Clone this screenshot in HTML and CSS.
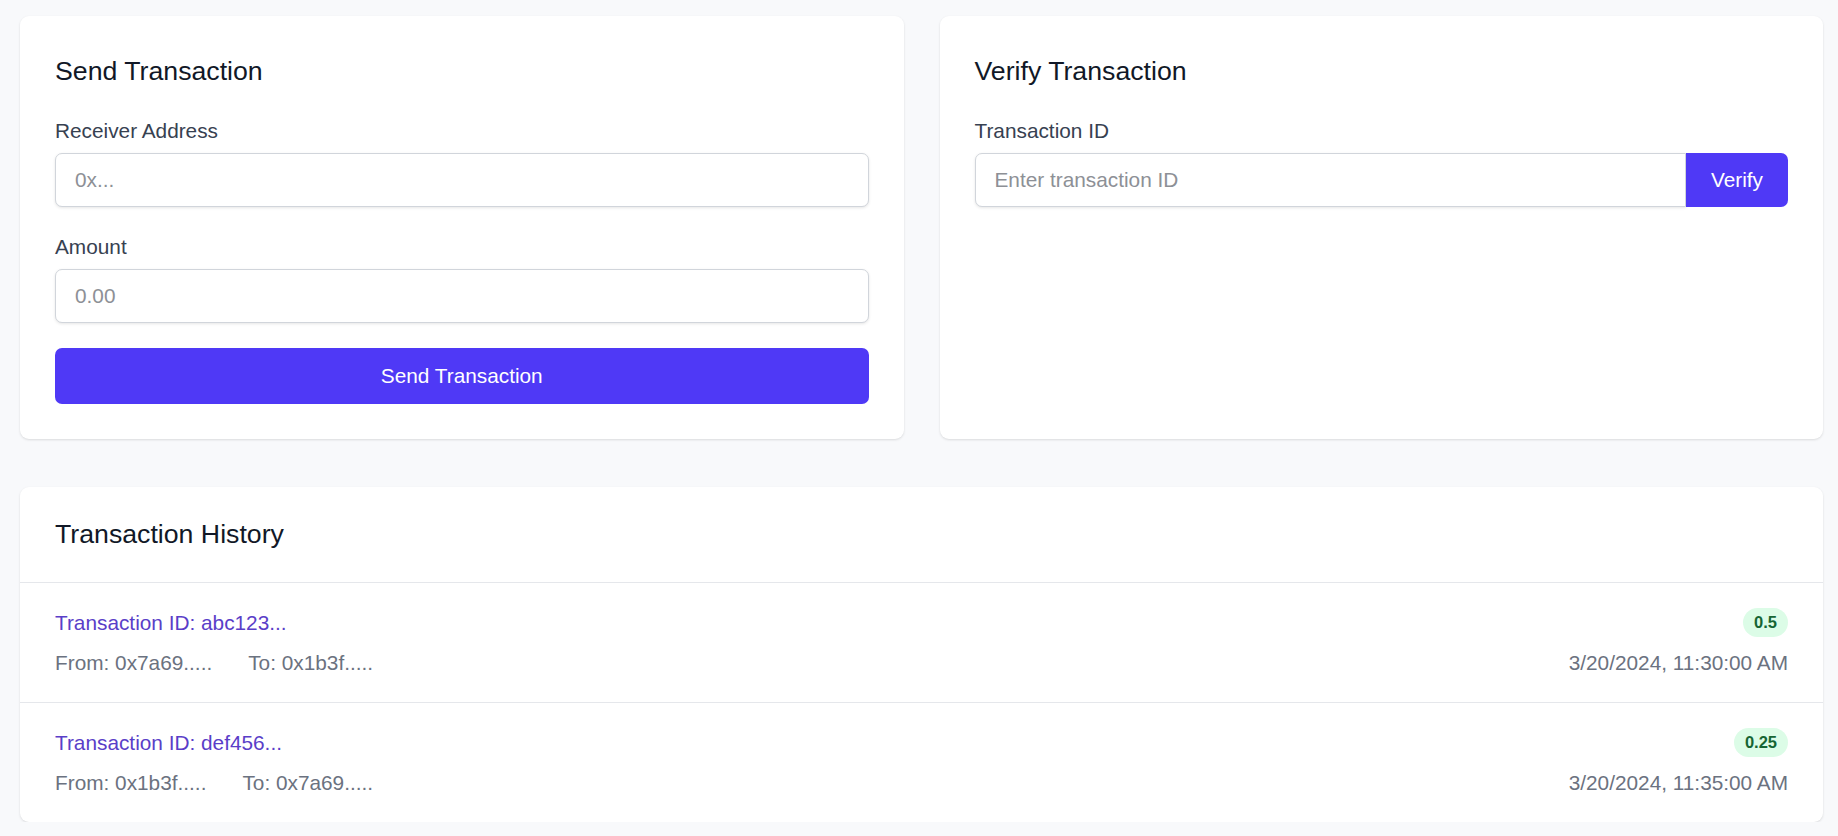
FILE: index.html
```html
<!DOCTYPE html>
<html lang="en">
<head>
<meta charset="utf-8">
<title>Transactions</title>
<link rel="stylesheet" href="styles.css">
</head>
<body>
<main class="page">
  <section class="top-grid">
    <div class="card form-card">
      <h2 class="card-title">Send Transaction</h2>
      <div class="field">
        <label class="label">Receiver Address</label>
        <input class="input" type="text" placeholder="0x...">
      </div>
      <div class="field">
        <label class="label">Amount</label>
        <input class="input" type="text" placeholder="0.00">
      </div>
      <button class="btn btn-block">Send Transaction</button>
    </div>
    <div class="card form-card">
      <h2 class="card-title">Verify Transaction</h2>
      <div class="field">
        <label class="label">Transaction ID</label>
        <div class="input-group">
          <input class="input input-joined" type="text" placeholder="Enter transaction ID">
          <button class="btn btn-joined">Verify</button>
        </div>
      </div>
    </div>
  </section>

  <section class="card history">
    <div class="history-header">
      <h2 class="card-title">Transaction History</h2>
    </div>
    <div class="tx-row">
      <div class="tx-line">
        <span class="tx-id">Transaction ID: abc123...</span>
        <span class="badge">0.5</span>
      </div>
      <div class="tx-line">
        <div class="tx-parties"><span>From: 0x7a69.....</span><span>To: 0x1b3f.....</span></div>
        <span class="tx-date">3/20/2024, 11:30:00 AM</span>
      </div>
    </div>
    <div class="tx-row">
      <div class="tx-line">
        <span class="tx-id">Transaction ID: def456...</span>
        <span class="badge">0.25</span>
      </div>
      <div class="tx-line">
        <div class="tx-parties"><span>From: 0x1b3f.....</span><span>To: 0x7a69.....</span></div>
        <span class="tx-date">3/20/2024, 11:35:00 AM</span>
      </div>
    </div>
  </section>
</main>
</body>
</html>
```

FILE: styles.css
```css
* { box-sizing: border-box; }

html, body {
  margin: 0;
  padding: 0;
  background: #f8f9fb;
  font-family: "Liberation Sans", Arial, sans-serif;
  font-size: 20.8px;
  color: #111827;
}

.page {
  padding: 16px 15px 0 20px;
  display: flex;
  flex-direction: column;
  gap: 48px;
}

.top-grid {
  display: grid;
  grid-template-columns: 1fr 1fr;
  gap: 36px;
}

.card {
  background: #ffffff;
  border-radius: 9px;
  box-shadow: 0 1px 3px rgba(0, 0, 0, 0.08), 0 1px 2px rgba(0, 0, 0, 0.05);
}

.form-card {
  padding: 38px 35px 35px;
  display: flex;
  flex-direction: column;
}

.card-title {
  margin: 0;
  font-size: 26.7px;
  line-height: 35px;
  font-weight: 400;
  color: #111827;
}

.form-card .card-title {
  margin-bottom: 28px;
}

.field {
  display: flex;
  flex-direction: column;
  margin-bottom: 26px;
}

.label {
  font-size: 20.8px;
  line-height: 28px;
  color: #374151;
  margin-bottom: 8px;
}

.input {
  height: 54px;
  width: 100%;
  border: 1px solid #d1d5db;
  border-radius: 7px;
  padding: 0 19px;
  font-family: inherit;
  font-size: 20.8px;
  color: #111827;
  background: #fff;
  box-shadow: 0 1px 3px rgba(0, 0, 0, 0.1);
  outline: none;
}

.input::placeholder {
  color: #8d9096;
}

.btn {
  background: #4f39f6;
  color: #ffffff;
  border: none;
  font-family: inherit;
  font-size: 20.8px;
  cursor: pointer;
}

.btn-block {
  height: 56px;
  width: 100%;
  border-radius: 7px;
  margin-top: -1px;
}

.input-group {
  display: flex;
}

.input-joined {
  flex: 1;
  border-top-right-radius: 0;
  border-bottom-right-radius: 0;
}

.btn-joined {
  width: 102px;
  height: 54px;
  border-radius: 0 7px 7px 0;
}

.history-header {
  padding: 30px 35px;
  border-bottom: 1px solid #e5e7eb;
}

.tx-row {
  padding: 25px 35px;
  display: flex;
  flex-direction: column;
  gap: 12px;
}

.tx-row + .tx-row {
  border-top: 1px solid #e5e7eb;
}

.tx-line {
  display: flex;
  justify-content: space-between;
  align-items: center;
  line-height: 28px;
}

.tx-id {
  color: #5a3ec8;
}

.badge {
  background: #dcfce7;
  color: #166534;
  font-weight: 700;
  font-size: 16.5px;
  line-height: 29px;
  padding: 0 11px;
  border-radius: 999px;
}

.tx-parties {
  display: flex;
  gap: 36px;
  color: #6b7280;
}

.tx-date {
  color: #6b7280;
}
```
